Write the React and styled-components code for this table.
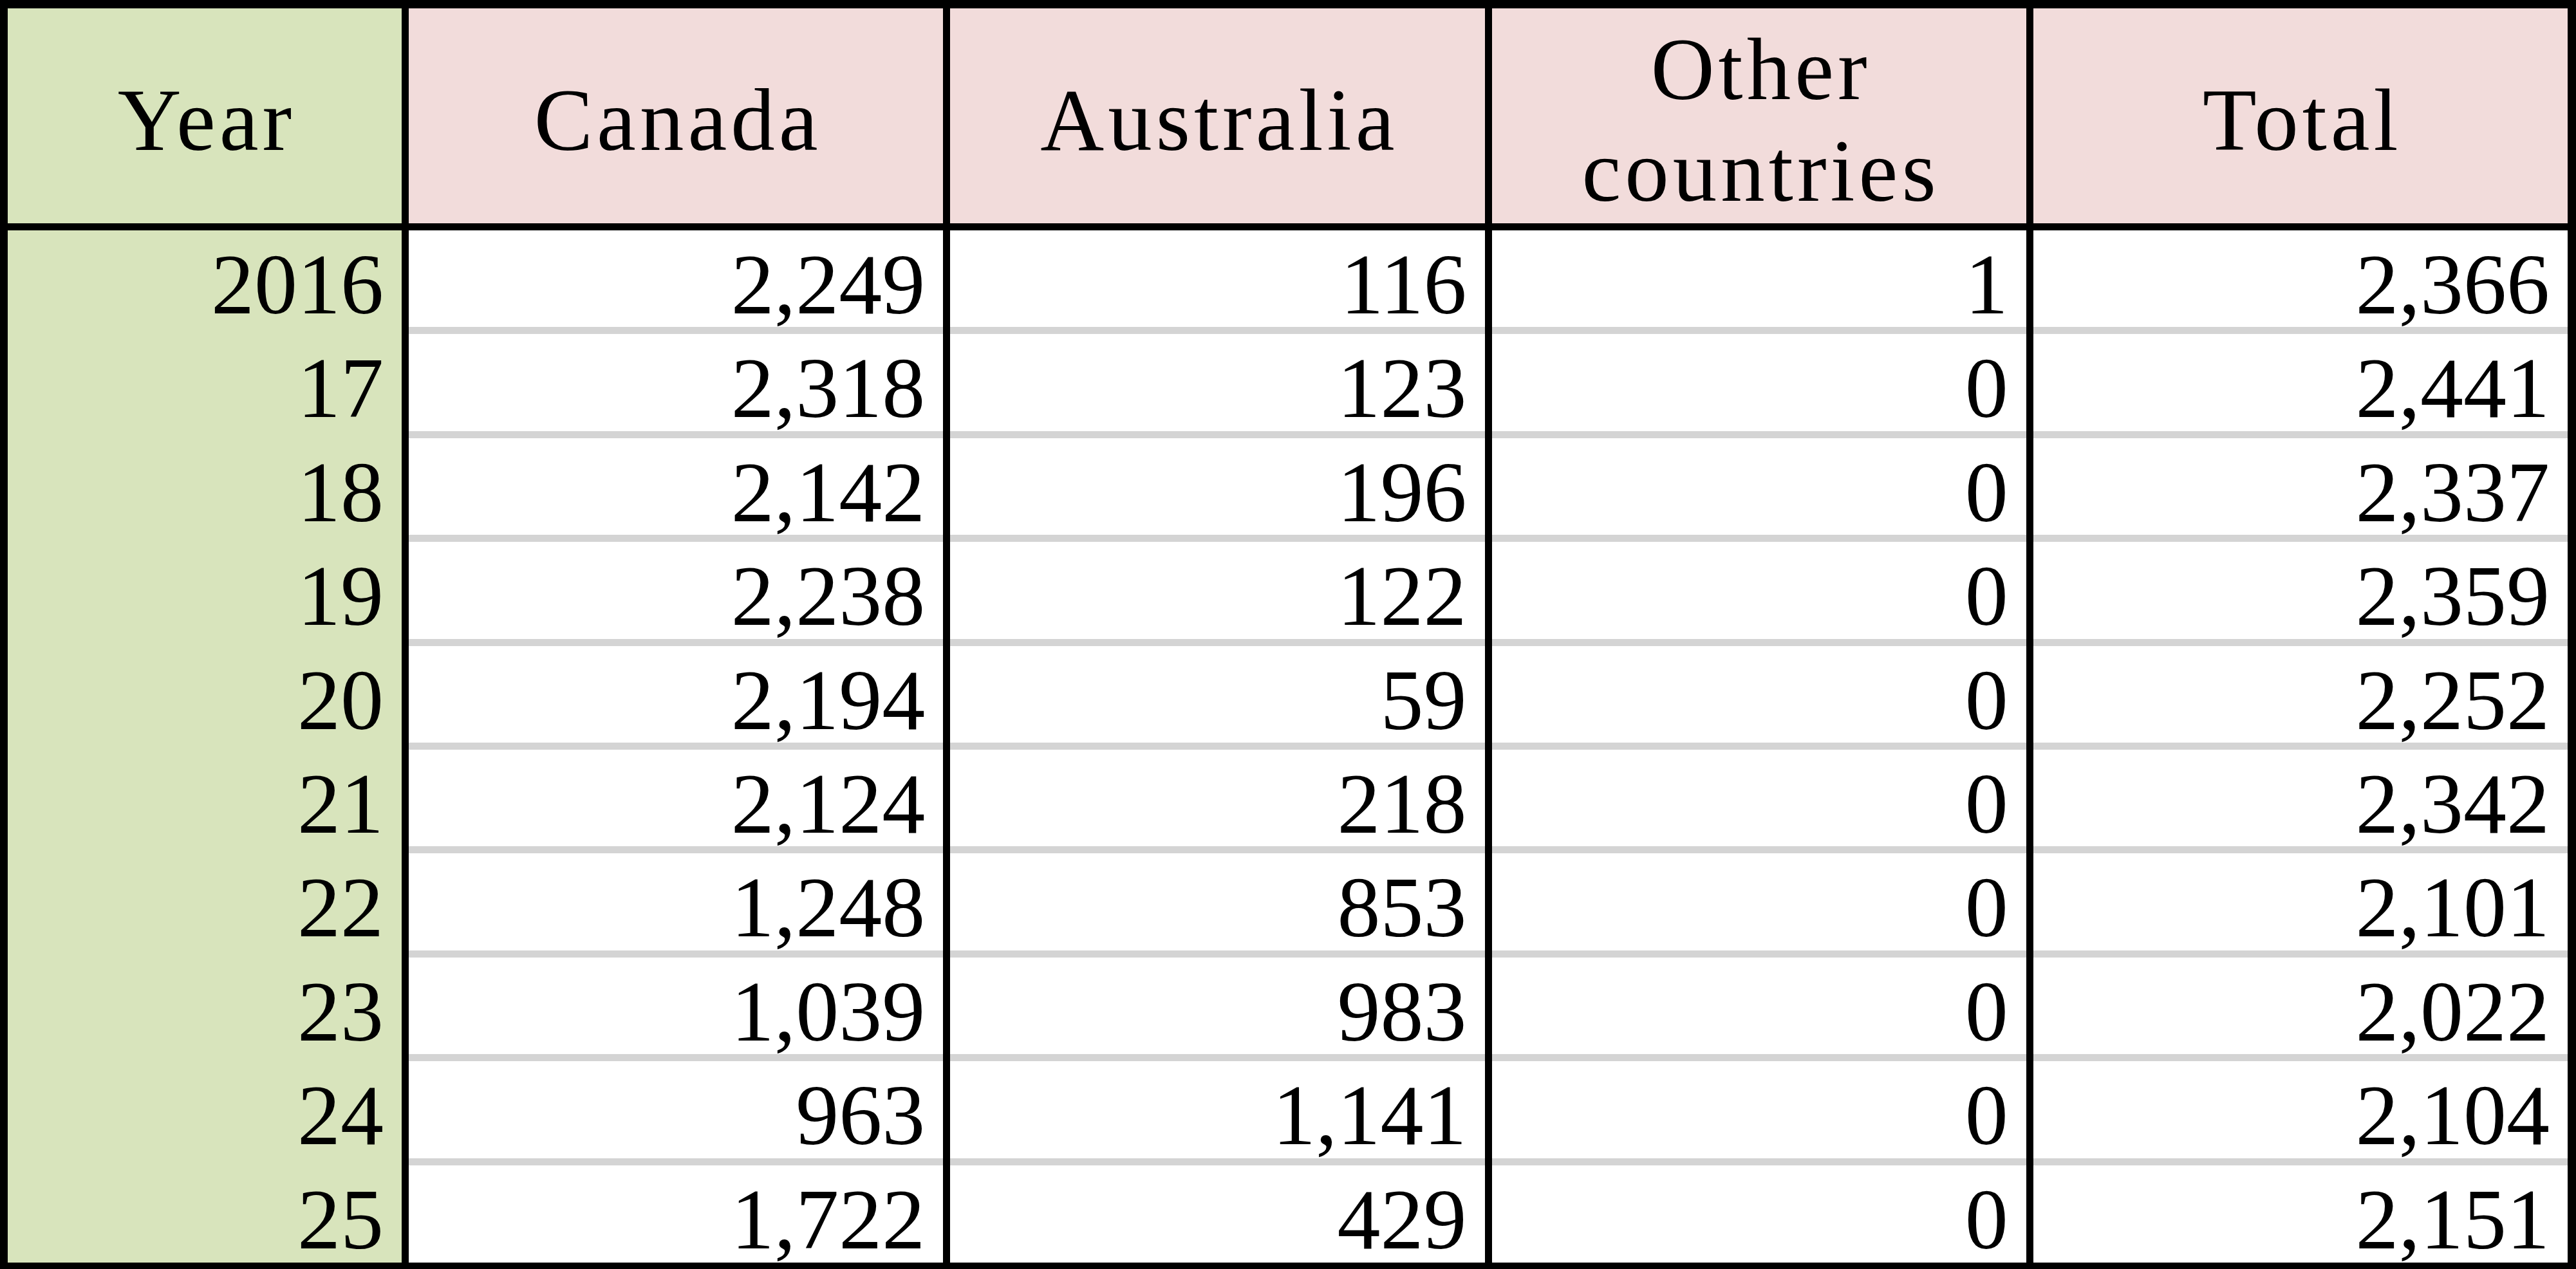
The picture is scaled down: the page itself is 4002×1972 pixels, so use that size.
import React from "react";
import styled, { createGlobalStyle } from "styled-components";

const GlobalStyle = createGlobalStyle`
  html, body {
    margin: 0;
    padding: 0;
    background: #fff;
  }
`;

const Table = styled.div`
  box-sizing: border-box;
  width: 4002px;
  height: 1972px;
  border-style: solid;
  border-color: #000;
  border-width: 13px 13px 12px 12px;
  background: #000;
  display: grid;
  grid-template-columns: 612px repeat(4, 1fr);
  grid-template-rows: 345px repeat(9, 161.4px) 1fr;
  column-gap: 11px;
  font-family: "Liberation Serif", "DejaVu Serif", serif;
  color: #000;
`;

const HeadCell = styled.div`
  box-sizing: border-box;
  background: ${(p) => (p.$year ? "#d8e4bc" : "#f2dcdb")};
  border-bottom: 11px solid #000;
  display: flex;
  align-items: center;
  justify-content: center;
  text-align: center;
  padding: 14px 0 0 6px;
  font-size: 137px;
  line-height: 158px;
  letter-spacing: 6px;
`;

const Cell = styled.div`
  box-sizing: border-box;
  background: ${(p) => (p.$year ? "#d8e4bc" : "#fff")};
  border-bottom: ${(p) =>
    p.$year || p.$last ? "none" : "11px solid #d4d4d4"};
  text-align: right;
  padding: 17px 28px 0 0;
  font-size: 134px;
  line-height: 1;
  white-space: nowrap;
`;

const rows = [
  ["2016", "2,249", "116", "1", "2,366"],
  ["17", "2,318", "123", "0", "2,441"],
  ["18", "2,142", "196", "0", "2,337"],
  ["19", "2,238", "122", "0", "2,359"],
  ["20", "2,194", "59", "0", "2,252"],
  ["21", "2,124", "218", "0", "2,342"],
  ["22", "1,248", "853", "0", "2,101"],
  ["23", "1,039", "983", "0", "2,022"],
  ["24", "963", "1,141", "0", "2,104"],
  ["25", "1,722", "429", "0", "2,151"],
];

export default function App() {
  return (
    <>
      <GlobalStyle />
      <Table>
        <HeadCell $year>Year</HeadCell>
        <HeadCell>Canada</HeadCell>
        <HeadCell>Australia</HeadCell>
        <HeadCell>
          Other
          <br />
          countries
        </HeadCell>
        <HeadCell>Total</HeadCell>
        {rows.map((row, i) =>
          row.map((value, j) => (
            <Cell
              key={`${i}-${j}`}
              $year={j === 0}
              $last={i === rows.length - 1}
            >
              {value}
            </Cell>
          ))
        )}
      </Table>
    </>
  );
}
